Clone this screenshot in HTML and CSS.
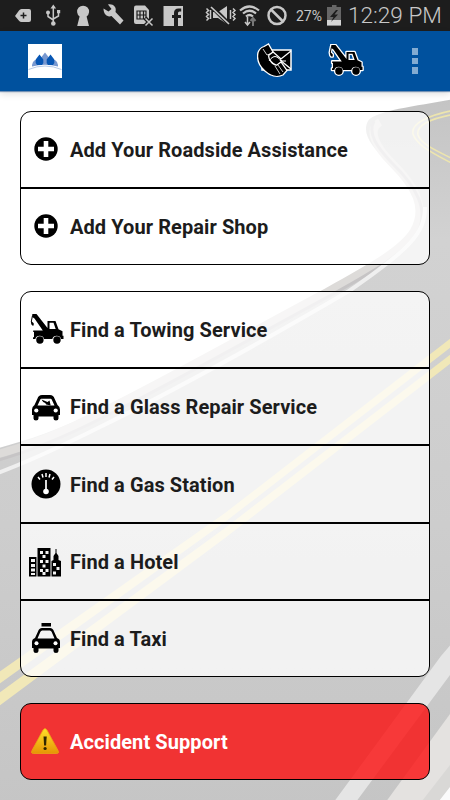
FILE: index.html
```html
<!DOCTYPE html>
<html lang="en">
<head>
<meta charset="utf-8">
<title>Roadside Assistance</title>
<link rel="stylesheet" href="styles.css">
</head>
<body>
<svg class="defs" width="0" height="0" aria-hidden="true">
  <defs>
    <symbol id="plus" viewBox="0 0 24 24"><circle cx="12" cy="12" r="11.700"/><path d="M9.700 4h4.600v5.700H20v4.600h-5.700V20H9.700v-5.700H4V9.700h5.700z" fill="#fff"/></symbol>
    <symbol id="tow" viewBox="0 0 34 32" overflow="visible">
      <path fill-rule="evenodd" d="M2.300 1h4.200L17.500 15V8h8l3 8.300 4 2v4.400h1v3.300h-2.400a4.600 4.600 0 0 0-8.800 0h-8.200a4.600 4.600 0 0 0-8.800 0H3v-1.700h1v-5.300H3.200v-1.600h9.600L4.500 5.500 2.300 4zM19.500 9.700v6.300h6.200l-2.200-6.300z"/>
      <path d="M3 2.500L1.800 8.500l1.900 1.700v2.300H2.200l-.9-1.300L.8 8.500 2 2.500z"/>
      <circle cx="9.900" cy="27" r="3.700"/><circle cx="27" cy="27" r="3.700"/>
    </symbol>
  </defs>
</svg>
<div class="screen">
  <svg class="road" viewBox="0 91 450 709" preserveAspectRatio="none" aria-hidden="true">
    <defs>
      <linearGradient id="asphalt" x1="0" y1="0" x2="0" y2="1"><stop offset="0" stop-color="#c4c4c4"/><stop offset=".2" stop-color="#d2d2d2"/><stop offset=".6" stop-color="#cdcdcd"/><stop offset="1" stop-color="#c5c5c5"/></linearGradient>
      <filter id="soft"><feGaussianBlur stdDeviation=".7"/></filter>
    </defs>
    <rect y="91" width="450" height="709" fill="#fff"/>
    <g filter="url(#soft)">
      <path d="M460 98C420 106 376 110 368 121C361 134 373 148 388 162C412 185 424 207 412 229C402 248 366 267 323 291C250 330 165 377 100 409C60 430 25 441-5 449V810H460Z" fill="url(#asphalt)"/>
      <path d="M380 122C366 130 377 148 392 163C416 187 427 208 414 231C402 251 366 270 327 292C250 333 165 381 100 413C60 434 25 447-5 455" fill="none" stroke="#dddbd9" stroke-width="8"/>
      <path d="M374 121C367 134 378 148 391 162C417 187 429 210 418 232C406 253 371 273 333 294C250 339 165 387 100 419C60 439 25 453-5 461" fill="none" stroke="#c6c4c5" stroke-width="3"/>
      <path d="M425 207C425 233 410 249 349 291C260 343 165 395 100 427C60 447 25 463-5 474" fill="none" stroke="#efefef" stroke-width="4"/>
      <path d="M455 110C425 116 411 124 413 134C417 146 433 153 455 165M455 114C428 119 416 126 418 135C421 144 435 150 455 160" fill="none" stroke="#ede5ae" stroke-width="1.600"/>
      <path d="M-5 675L225 513L455 335V344L225 522L-5 687Z" fill="#f1e8b8"/>
      <path d="M-5 696L225 528L455 351V360L225 538L-5 709Z" fill="#f1e8b8"/>
      <path d="M328 810L441 656L460 634V662L450 675L350 810Z" fill="#e5e5e5"/>
      <path d="M380 810L450 714L460 702V810Z" fill="#e4e2e0"/>
      <path d="M415 810L450 765L460 752V810Z" fill="#d9d8d6"/>
      <path d="M432 810L450 787L460 774V810Z" fill="#fbfbfb"/>
    </g>
  </svg>

  <header class="status">
    <svg class="status-icons" viewBox="0 0 190 31" fill="#c8c8c8">
      <path d="M15 16l4-5.500q1-1.500 2.500-1.500H29q2 0 2 2v9q0 2-2 2h-7.500q-1.500 0-2.500-1.200z"/><path d="M20.500 15.500h6M23.500 12.500v6" stroke="#1d1d1d" stroke-width="1.500"/>
      <g stroke="#c8c8c8" stroke-width="1.500" fill="none"><path d="M53.300 7v16M48 13v3.500l5.300 3.500M58.500 12v4l-5.200 3"/></g><path d="M50.500 8.500l2.800-4 2.800 4zM57 10h3.200v3.200H57z"/><circle cx="48" cy="12.500" r="2"/><circle cx="53.300" cy="23.500" r="2.300"/>
      <path d="M79.600 16.500a6 6 0 1 1 7 0L89 26H77.200z"/>
      <path d="M103.500 8.500l5 3 3-2.500-3.500-4.500c5-1 9 2.500 7.500 7.500l8 8.500-3.500 4-8.500-8.500c-4 1.500-8-1.500-8-7.500z"/>
      <path d="M134 7.500q0-2 2-2h9l4 4.500V24h-13q-2 0-2-2z"/><path d="M137 11h9v8h-9zM140 11v8M143.500 11v8M137 15h9" stroke="#1d1d1d" stroke-width="1.200" fill="none"/><path d="M145 18l8 8m0-8l-8 8" stroke="#1d1d1d" stroke-width="4"/><path d="M145.500 18.500l7 7m0-7l-7 7" stroke="#c8c8c8" stroke-width="1.500"/>
      <path d="M163.500 6h19.500v20h-5v-8h3v-3h-3v-2q0-1.500 1.500-1.500h1.700V8.500h-2.700q-4.500 0-4.500 4.500v2h-2v3h2v8h-10.500z"/>
    </svg>
    <svg class="signal-icons" viewBox="204 0 86 31" fill="none" stroke="#c8c8c8" stroke-width="1.500">
      <path d="M206.500 8.500l2 2-2 2 2 2-2 2 2 2-2 2M210.500 10v9M230.500 10v9M233 8.500l2 2-2 2 2 2-2 2 2 2-2 2"/>
      <path d="M213 12h5l9-6v18l-9-6h-5z" fill="#c8c8c8" stroke="none"/><path d="M212 7l17 17" stroke="#1d1d1d" stroke-width="4"/><path d="M211 7l18 17" stroke-width="1.700"/>
      <path d="M240 10.500q9.500-8 19 0M243 13.500q6.500-5.500 13 0M246 16.500q3.500-3 7 0" stroke-width="2.200"/><path d="M247.500 17v7M245 22l2.500 3 2.500-3"/><path d="M253 26v-7m-2.500 2l2.500-3 2.500 3" stroke="#777" stroke-width="2"/>
      <circle cx="277" cy="15.500" r="8.500" stroke-width="2.500"/><path d="M271 9.500l12 12" stroke-width="2.500"/>
    </svg>
    <span class="percent">27%</span>
    <svg class="battery" viewBox="0 0 14 21"><path d="M5 0h4.500v2H14v18.500H0V2h5z" fill="#666"/><path d="M0 15h14v5.500H0z" fill="#d5d5d5"/><path d="M9 5L3 12h3.500L4 17l7-7.500H7.500L11 5z" fill="#1d1d1d"/></svg>
    <span class="clock">12:29 PM</span>
  </header>

  <nav class="bar">
    <svg class="logo" viewBox="0 0 34 34"><path fill="#fff" d="M0 0h34v34H0z"/><path fill="#7898d0" d="M17 8.500L20.500 13 22 16h5q2.500 1.500 3 5v1.500Q17 19 4 22.500V21q.5-3.500 3-5h5l1.500-3z"/><path fill="#0756b4" d="M11.500 10.500l3.800 5v3.500l-1.300 2H9l-1.300-2v-3.500zM22.500 10.500l3.800 5v3.500L25 21h-5l-1.300-2v-3.500z"/><path d="M.5 25.500q16.500-7 33 0" fill="none" stroke="#a6bbdf" stroke-width=".8"/></svg>
    <svg class="contact" viewBox="0 0 36 36">
      <path d="M12 7h22v20H5V17z" stroke="#fff" stroke-width="1.500"/><path d="M15 8l9 8L34 8M23 17l11 9" fill="none" stroke="#fff" stroke-width="1.300"/>
      <path d="M7 3.500L11.500 1l4.500 8-4 3c-1.500 3.500 4 10.500 8 10l4-3 6 8.500-4 4.500c-12 6-28-9-25-22.500 1-3 3-5 6-6z" stroke="#fff" stroke-width="1.300"/>
      <path d="M12 18q4-6 8-4l5 4h4" fill="none" stroke="#fff"/><path d="M6 6l4 6 3-1M18 23l5 8M21 22l5 7" fill="none" stroke="#fff" stroke-width=".8"/>
    </svg>
    <svg class="towbar" viewBox="-1 0 37 34"><use href="#tow" width="34" height="32" stroke="#fff" stroke-width="2.600" stroke-linejoin="round"/><use href="#tow" width="34" height="32"/></svg>
    <span class="more"><i></i><i></i><i></i></span>
  </nav>

  <main class="content">
    <section class="card">
      <div class="row"><svg class="icon plus"><use href="#plus"/></svg><span>Add Your Roadside Assistance</span></div>
      <div class="row"><svg class="icon plus"><use href="#plus"/></svg><span>Add Your Repair Shop</span></div>
    </section>
    <section class="card">
      <div class="row"><svg class="icon tow"><use href="#tow"/></svg><span>Find a Towing Service</span></div>
      <div class="row"><svg class="icon car" viewBox="0 0 30 28"><path d="M3.500 11L6.500 4.500q1-3.500 4.500-3.500h8q3.500 0 4.500 3.500l3 6.500q2.500 1.500 2.500 4.500V21h-1.500v3.500q0 2-2.500 2t-2.500-2V22.500h-15v2q0 2-2.500 2t-2.500-2V21H1v-5.500q0-3 2.500-4.500z"/><path d="M6.500 11.500L9.300 5.500q.3-.7 1-.7h9.400q.7 0 1 .7l2.800 6z" fill="#fff"/><path d="M10.500 5.500l6 2.500 2-1.500 1.200 5-4.500-1-1-1.500-2-1z"/><circle cx="5.300" cy="16.500" r="2.100" fill="#fff"/><circle cx="24.700" cy="16.500" r="2.100" fill="#fff"/></svg><span>Find a Glass Repair Service</span></div>
      <div class="row"><svg class="icon gauge" viewBox="0 0 30 30"><circle cx="15" cy="15" r="14.500"/><path d="M7 8l2 2.500M11 5l1 3.500M15 4v4M19 5l-1 3.500M23 8l-2 2.500" stroke="#fff" stroke-width="1.500"/><path d="M15 11v12" stroke="#fff" stroke-width="1.700"/><circle cx="15" cy="22.500" r="2.800" fill="#fff"/></svg><span>Find a Gas Station</span></div>
      <div class="row"><svg class="icon hotel" viewBox="0 0 32 30"><path d="M0 10h7.500v19.500H0zM8.500 1h13v28.500h-13zM22.500 29.500V14l2-1V9l2-3V2h1v4l2 3v4l2.500 1v15.500z"/><path fill="#f4f4f4" d="M2 12h4v3H2zM2 17h4v3H2zM2 21.500h4v3H2zM2 26h4v2H2zM11 4h3v3h-3zM16.500 4h3v3h-3zM13.500 8h3v3h-3zM11 13h3v3h-3zM16.500 13h3v3h-3zM13.500 17.500h3v3h-3zM11 22h3v3h-3zM16.500 22h3v3h-3zM13.500 25h3v3h-3zM24 16h3v3h-3zM27.500 20h3v3h-3zM24 24.500h3v3h-3z"/></svg><span>Find a Hotel</span></div>
      <div class="row"><svg class="icon taxi" viewBox="0 0 30 31"><path d="M10.500 0h9.500v3.500h-9.500zM4 15L7 8.500Q8 5 11 5h8q3 0 4 3.500L26 15q3 1 3 4v6h-1.500v3q0 2-2.500 2t-2.500-2v-2.500h-15V28q0 2-2.500 2t-2.500-2v-3H1v-6q0-3 3-4z"/><path d="M6.500 15.500l2.800-6.500q.5-1.500 2-1.500h7.400q1.500 0 2 1.500l2.800 6.500z" fill="#f4f4f4"/><circle cx="5.500" cy="20.300" r="2" fill="#fff"/><circle cx="24.500" cy="20.300" r="2" fill="#fff"/></svg><span>Find a Taxi</span></div>
    </section>
    <section class="card alert">
      <div class="row"><svg class="icon warn" viewBox="0 0 28 27"><defs><linearGradient id="gold" x2="0" y2="1"><stop stop-color="#ffe229"/><stop offset="1" stop-color="#e59505"/></linearGradient></defs><path d="M12 2q2-3 4 0l11 20.500q1.500 3-1.500 3h-23q-3 0-1.500-3z" fill="url(#gold)" stroke="#eaa313" stroke-width=".8"/><path d="M12.500 8.500h3.200l-.6 9h-2z" fill="#302800"/><circle cx="14.100" cy="20.500" r="1.600" fill="#302800"/></svg><span>Accident Support</span></div>
    </section>
  </main>
</div>
</body>
</html>
```

FILE: styles.css
```css
* { box-sizing: border-box; }
body { margin: 0; font-family: Roboto, "Liberation Sans", sans-serif; }
.defs { position: absolute; }
.screen { position: relative; width: 450px; height: 800px; overflow: hidden; display: flex; flex-direction: column; }
.road { position: absolute; left: 0; top: 91px; width: 450px; height: 709px; }
.status, .bar, .content { position: relative; }
.status { height: 31px; flex: none; display: flex; align-items: center; background: #1d1d1d; color: #c8c8c8; }
.status svg { flex: none; }
.status-icons { width: 190px; height: 31px; }
.signal-icons { width: 86px; height: 31px; margin-left: 14px; }
.percent { width: 31px; margin-left: 6px; font-size: 14px; line-height: 31px; padding-top: 1px; white-space: nowrap; }
.battery { width: 14px; height: 21px; }
.clock { margin-left: 7px; width: 96px; font-size: 22.600px; font-weight: 300; line-height: 31px; white-space: nowrap; }
.bar { height: 60px; flex: none; display: flex; align-items: center; background: #00519e; box-shadow: 0 1px 1px rgba(0, 60, 130, .5), 0 3px 7px rgba(0, 0, 0, .13); }
.bar svg { flex: none; }
.logo { width: 34px; height: 34px; margin-left: 28px; }
.contact { width: 36px; height: 36px; margin-left: 195px; }
.towbar { width: 37px; height: 34px; margin-left: 35px; }
.more { display: flex; flex-direction: column; gap: 3px; margin-left: 47px; }
.more i { width: 6px; height: 6.500px; background: #83abd1; }
.content { padding: 20px 20px 0; display: flex; flex-direction: column; gap: 25.300px; }
.card { border: 1px solid #000; border-radius: 11px; background: rgba(255, 255, 255, .75); overflow: hidden; }
.row { height: 77.400px; display: flex; align-items: center; font-size: 20px; font-weight: 700; letter-spacing: .08px; color: #1c1c1c; white-space: nowrap; border-bottom: 2px solid #000; }
.row:last-child { height: 75px; border-bottom: 0; }
.row span { margin-left: auto; width: 359px; padding-top: 1px; }
.icon { flex: none; fill: #000; }
.plus { width: 24px; height: 24px; margin-left: 12.500px; margin-top: -1px; }
.tow { width: 34px; height: 32px; margin-left: 8.500px; margin-top: -1px; }
.car { width: 30px; height: 28px; margin-left: 9.500px; margin-top: 3px; }
.gauge { width: 30px; height: 30px; margin-left: 9.500px; }
.hotel { width: 32px; height: 30px; margin-left: 8px; }
.taxi { width: 30px; height: 31px; margin-left: 9.500px; }
.warn { width: 28px; height: 27px; margin-left: 10px; }
.alert { background: rgba(251, 14, 14, .8); }
.alert .row { color: #fff; }
```
